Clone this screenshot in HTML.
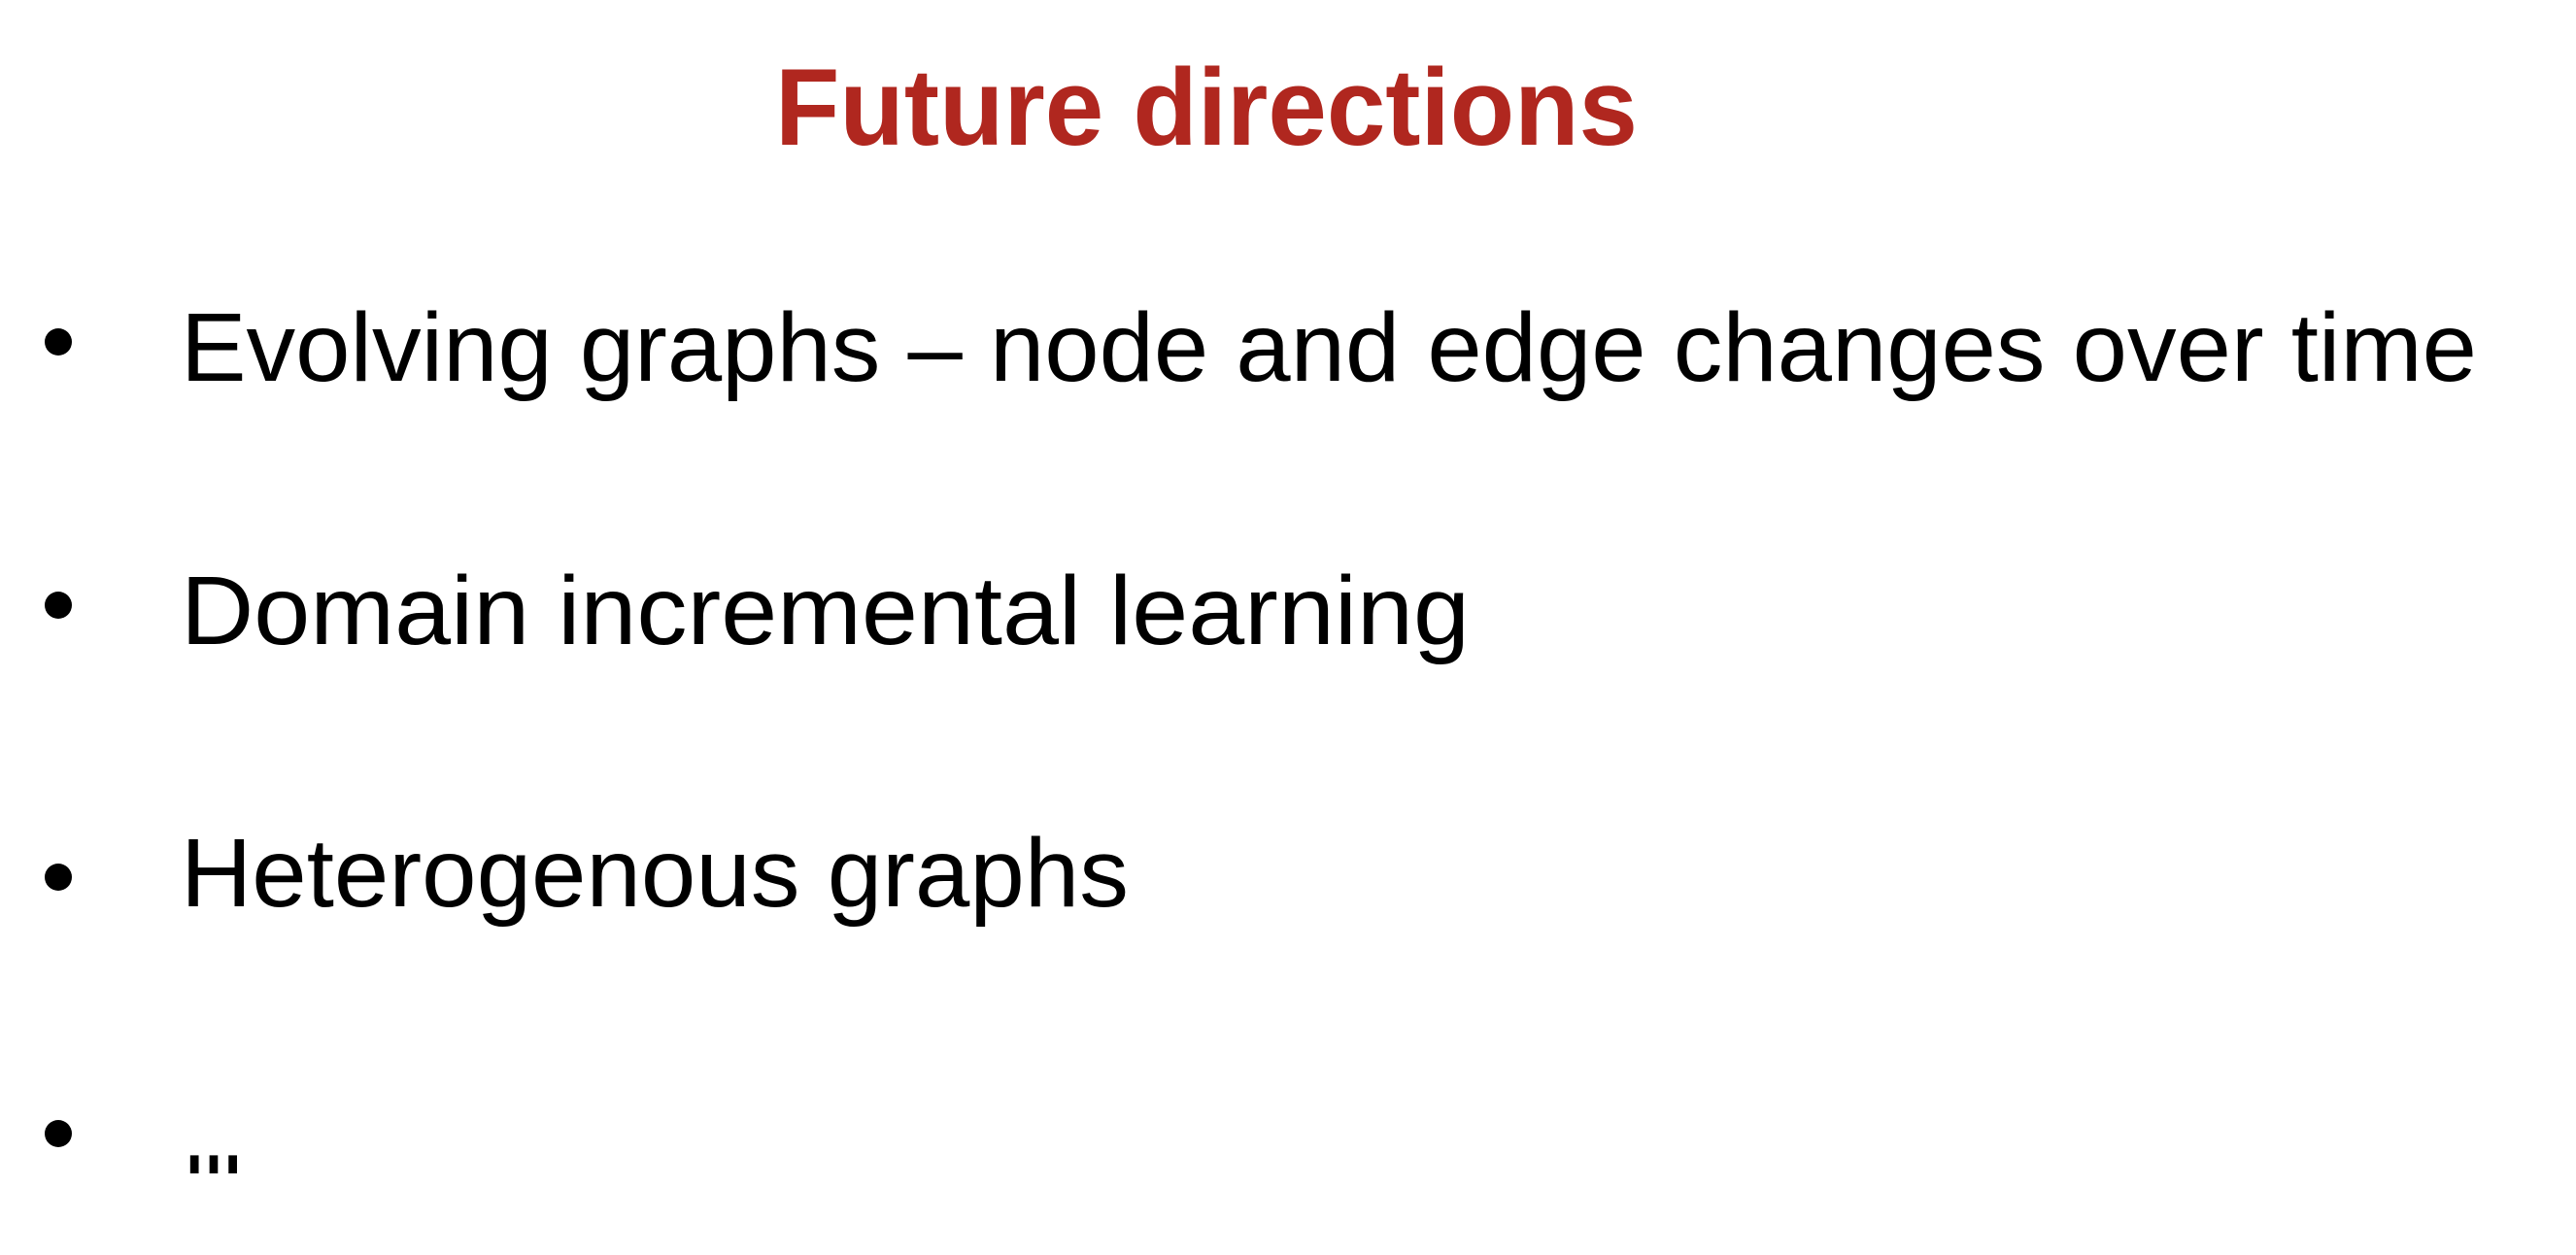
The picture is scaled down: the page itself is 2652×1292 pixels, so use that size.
<!DOCTYPE html>
<html><head><meta charset="utf-8"><style>
html,body{margin:0;padding:0;background:#fff;}
svg{display:block;}
text{font-family:"Liberation Sans",sans-serif;}
</style></head><body>
<svg width="2652" height="1292" viewBox="0 0 2652 1292" xmlns="http://www.w3.org/2000/svg">
<rect width="2652" height="1292" fill="#fff"/>
<text x="798" y="149" font-size="112" font-weight="bold" fill="#b0271f" textLength="888" lengthAdjust="spacingAndGlyphs">Future directions</text>
<g fill="#000">
<circle cx="60" cy="352" r="14"/>
<circle cx="60" cy="623" r="14"/>
<circle cx="60" cy="903" r="14"/>
<circle cx="60" cy="1167" r="14"/>
</g>
<g font-size="100" fill="#000">
<text x="186" y="392" textLength="2364" lengthAdjust="spacingAndGlyphs">Evolving graphs – node and edge changes over time</text>
<text x="186" y="663" textLength="1327" lengthAdjust="spacingAndGlyphs">Domain incremental learning</text>
<text x="186" y="933" textLength="976" lengthAdjust="spacingAndGlyphs">Heterogenous graphs</text>
<text x="189" y="1208" font-size="125" font-weight="bold" textLength="62" lengthAdjust="spacingAndGlyphs">…</text>
</g>
</svg>
</body></html>
